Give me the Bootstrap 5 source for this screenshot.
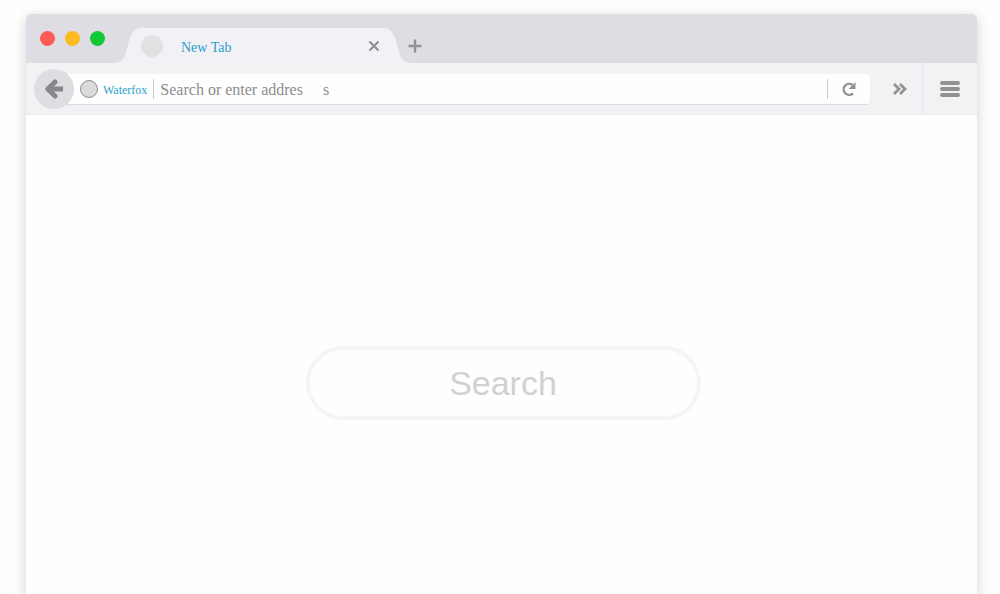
<!DOCTYPE html>
<html lang="en">
<head>
<meta charset="utf-8">
<meta name="viewport" content="width=device-width, initial-scale=1">
<title>New Tab</title>
<link href="https://cdn.jsdelivr.net/npm/bootstrap@5.3.0/dist/css/bootstrap.min.css" rel="stylesheet">
<style>
  body { background: #fefefe; font-family: "Liberation Serif", "Times New Roman", serif; }
  .browser { margin: 14px 23px 0 26px; background: #fefefe; border-radius: 5px 5px 0 0; box-shadow: 0 4px 14px rgba(0, 0, 0, .18); }
  .tab-strip { height: 49px; background: #dedde4; border-radius: 5px 5px 0 0; padding-left: 14px; }
  .dots { gap: 10px; padding-top: 17px; }
  .dot { width: 15px; height: 15px; }
  .dot-red { background: #fd5b53; }
  .dot-amber { background: #fdbb1f; }
  .dot-green { background: #12c935; }
  .tab-item { height: 35px; margin-left: 9px; }
  .tab-edge { fill: #f2f1f5; }
  .tab-body { width: 243px; background: #f2f1f5; }
  .favicon { width: 22px; height: 22px; background: #e1e1e3; }
  .tab-link { color: #2a9fcb; font-size: 14px; line-height: 20px; margin-left: 18px; padding-top: 4px; }
  .plain { border: 0; background: none; padding: 0; color: #929294; line-height: 1; display: flex; align-items: center; justify-content: center; }
  .new-tab { width: 14px; height: 35px; margin-left: -3px; }
  .toolbar { height: 52px; background: #f2f2f4; border-bottom: 1px solid #eeeeef; padding-left: 8px; }
  .back { width: 40px; height: 40px; border-radius: 50%; background: #dedee2; color: #88888b; flex: none; z-index: 1; }
  .address { height: 30px; background: #fefefe; border-radius: 0 3px 3px 0; box-shadow: 0 1px 1px #dcdce0; margin-left: -8px; padding-left: 14px; min-width: 0; }
  .site-mark { width: 18px; height: 18px; background: #dadadb; border: 1px solid #8e8e90; flex: none; }
  .site-link { color: #2a9fcb; font-size: 12px; line-height: 18px; padding-top: 2px; margin: 0 6px 0 5px; }
  .rule { width: 1px; height: 20px; background: #cfcbc9; flex: none; }
  .address-input { border: 0; background: none; font-size: 16px; line-height: 20px; color: #8c8c8e; padding: 2px 0 0 6px; min-width: 0; }
  .address-input::placeholder, .search-input::placeholder { color: inherit; opacity: 1; }
  .reload { width: 42px; height: 30px; }
  .more { width: 53px; height: 51px; border-right: 1px solid #e8e8ec; }
  .menu { width: 54px; height: 51px; }
  .page { min-height: calc(100vh - 115px); padding: 231px 0 0 3px; }
  .search-input { width: 395px; max-width: 90%; height: 74px; border: 4px solid #f5f5f6; border-radius: 37px; background: #fefefe; color: #d1d1d3; font-family: "Liberation Sans", Arial, sans-serif; font-size: 34px; padding: 0; }
</style>
</head>
<body>
<div class="browser">
  <header class="tab-strip d-flex">
    <div class="dots d-flex">
      <span class="dot dot-red rounded-circle"></span>
      <span class="dot dot-amber rounded-circle"></span>
      <span class="dot dot-green rounded-circle"></span>
    </div>
    <div class="tab-item d-flex align-self-end">
      <svg class="tab-edge" width="27" height="35" viewBox="0 0 27 35"><path d="M0 35C8 34 10 31 12 24L15 13C18 4 21 0 27 0V35Z"/></svg>
      <div class="tab-body d-flex align-items-center">
        <span class="favicon rounded-circle"></span>
        <a class="tab-link text-decoration-none" href="#">New Tab</a>
        <button class="plain ms-auto me-1" type="button" aria-label="Close tab"><svg width="12" height="12" viewBox="0 0 12 12" fill="none" stroke="currentColor" stroke-width="2.2"><path d="M1.500 1.500l9 9M10.500 1.500l-9 9"/></svg></button>
      </div>
      <svg class="tab-edge" width="27" height="35" viewBox="0 0 27 35"><path d="M27 35C19 34 17 31 15 24L12 13C9 4 6 0 0 0V35Z"/></svg>
    </div>
    <button class="plain new-tab align-self-end" type="button" aria-label="New tab"><svg width="14" height="14" viewBox="0 0 14 14" fill="none" stroke="currentColor" stroke-width="2.400"><path d="M7 .5v13M.5 7h13"/></svg></button>
  </header>
  <div class="toolbar d-flex align-items-center">
    <button class="plain back" type="button" aria-label="Back"><svg width="20" height="20" viewBox="0 0 20 20" fill="none" stroke="currentColor" stroke-width="5" stroke-linejoin="round"><path d="M11 3L3.800 10l7.200 7" stroke-linecap="round"/><path d="M4 10h15"/></svg></button>
    <div class="address d-flex align-items-center flex-grow-1">
      <span class="site-mark rounded-circle"></span>
      <a class="site-link text-decoration-none" href="#">Waterfox</a>
      <span class="rule"></span>
      <input class="address-input flex-grow-1" type="text" aria-label="Address" placeholder="Search or enter addres     s">
      <span class="rule"></span>
      <button class="plain reload" type="button" aria-label="Reload"><svg width="16" height="16" viewBox="0 0 16 16"><path d="M11.500 4A5.500 5.500 0 1 0 12 12.300" fill="none" stroke="currentColor" stroke-width="2.400"/><path d="M14.500 1v7H7.500Z" fill="currentColor"/></svg></button>
    </div>
    <button class="plain more ps-2" type="button" aria-label="More tools"><svg width="16" height="12" viewBox="0 0 16 12" fill="none" stroke="currentColor" stroke-width="2.800"><path d="M2 1L7 6l-5 5M8 1L13 6l-5 5"/></svg></button>
    <button class="plain menu" type="button" aria-label="Menu"><svg width="20" height="16" viewBox="0 0 20 16" fill="currentColor"><rect width="20" height="4" rx="2"/><rect y="6" width="20" height="4" rx="2"/><rect y="12" width="20" height="4" rx="2"/></svg></button>
  </div>
  <main class="page text-center">
    <input class="search-input text-center" type="text" aria-label="Search" placeholder="Search">
  </main>
</div>
<script src="https://cdn.jsdelivr.net/npm/bootstrap@5.3.0/dist/js/bootstrap.bundle.min.js"></script>
</body>
</html>
